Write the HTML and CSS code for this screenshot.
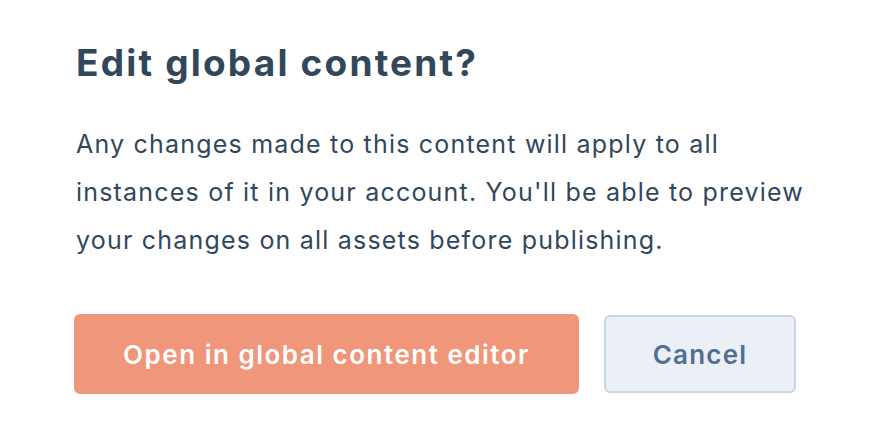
FILE: index.html
```html
<!DOCTYPE html>
<html lang="en">
<head>
<meta charset="utf-8">
<title>Edit global content?</title>
<link rel="stylesheet" href="styles.css">
</head>
<body>
<div class="dialog">
  <h1 class="title">Edit global content?</h1>
  <p class="message">Any changes made to this content will apply to all instances of it in your account. You'll be able to preview your changes on all assets before publishing.</p>
  <div class="actions">
    <button class="btn btn-primary" type="button">Open in global content editor</button>
    <button class="btn btn-secondary" type="button">Cancel</button>
  </div>
</div>
</body>
</html>
```
FILE: styles.css
```css
html, body {
  margin: 0;
  padding: 0;
  background: #ffffff;
}
body {
  width: 890px;
  height: 438px;
  overflow: hidden;
  font-family: "Inter", "Lato", sans-serif;
  color: #33475b;
}
.dialog {
  padding: 40px 0 0 74px;
  width: 760px;
}
.title {
  margin: 0;
  font-size: 37px;
  line-height: 46px;
  font-weight: 700;
  letter-spacing: 2.2px;
  padding-left: 2px;
}
.message {
  margin: 34px 0 0 2px;
  font-size: 25px;
  line-height: 48px;
  font-weight: 400;
  letter-spacing: 1.2px;
  width: 750px;
}
.actions {
  display: flex;
  gap: 25px;
  margin-top: 50px;
}
.btn {
  font-family: inherit;
  font-size: 26px;
  font-weight: 600;
  letter-spacing: 1.2px;
  height: 80px;
  border-radius: 6px;
  cursor: pointer;
  padding: 0;
}
.btn-primary {
  width: 505px;
  background: #f0967a;
  border: 2px solid #f0967a;
  color: #ffffff;
  letter-spacing: 1.5px;
}
.btn-secondary {
  width: 192px;
  height: 78px;
  margin-top: 1px;
  background: #eaf0f6;
  border: 2px solid #cbd6e2;
  color: #516f90;
}
```
